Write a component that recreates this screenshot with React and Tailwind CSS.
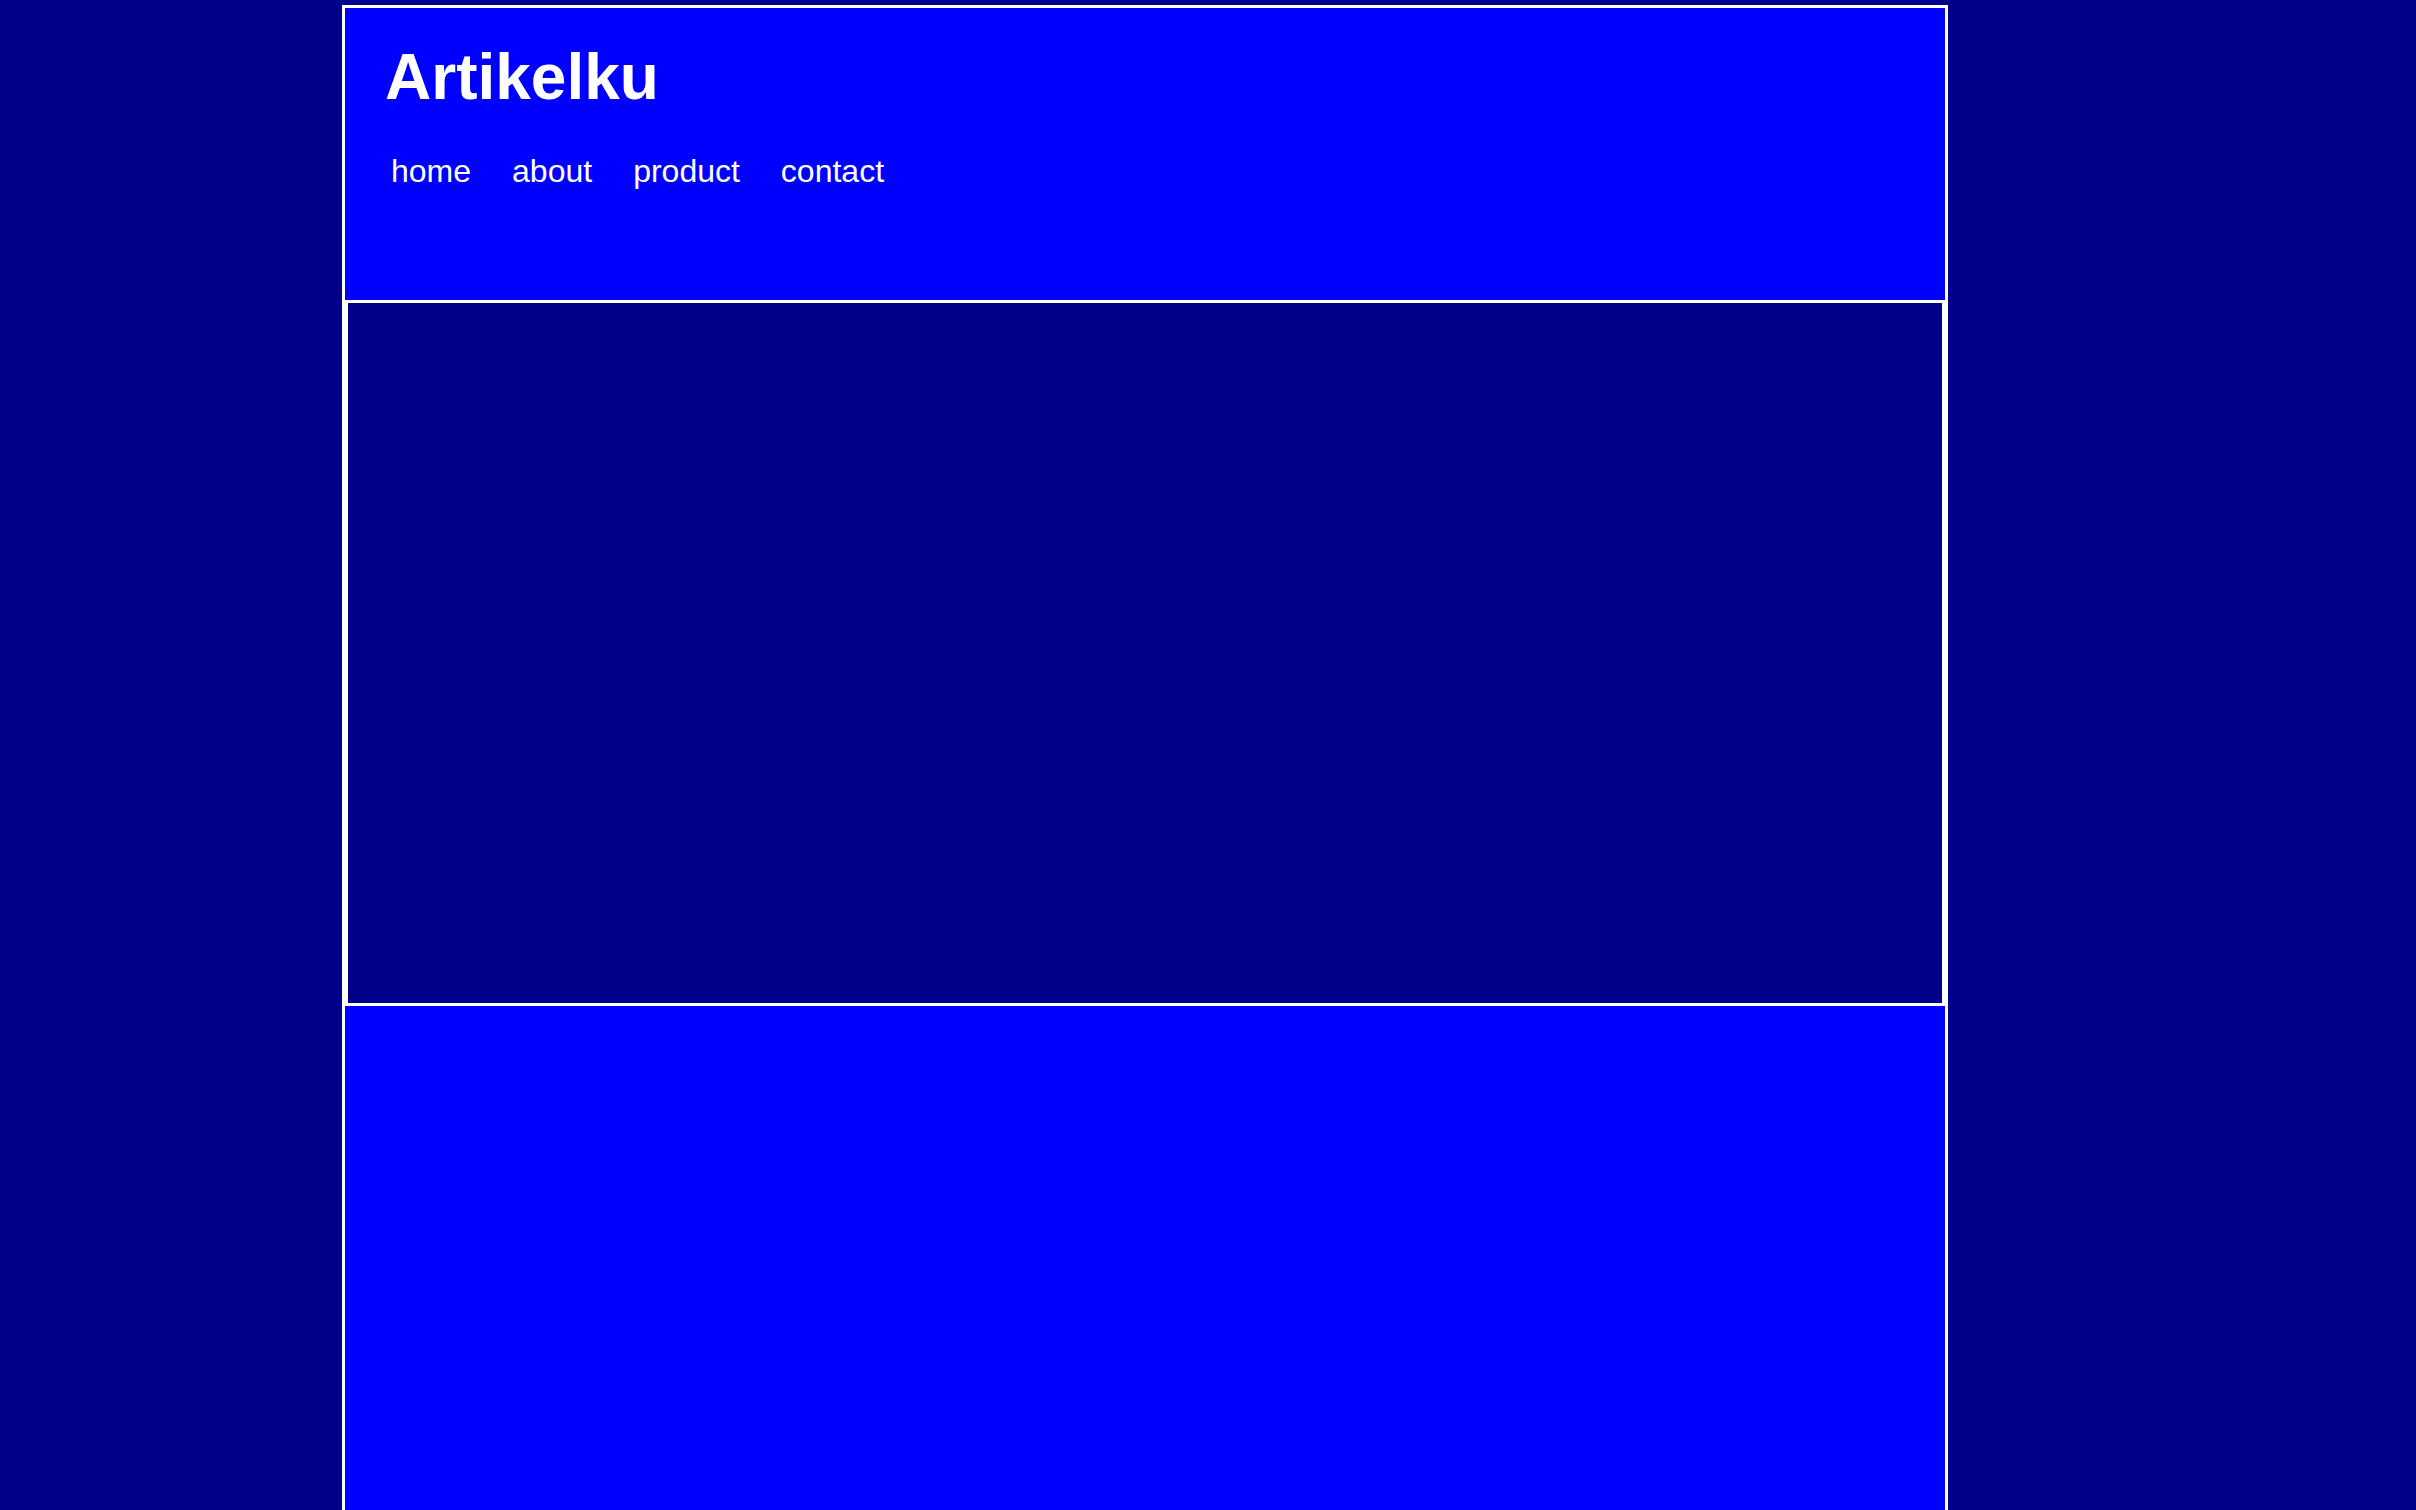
export default function App() {
  return (
    <div className="min-h-[1510px] bg-[#00008b] pt-[5px] overflow-hidden" style={{ fontFamily: '"Liberation Sans", Arial, sans-serif' }}>
      <div className="ml-[342px] w-[1606px] border-[3px] border-b-0 border-white bg-[#0000ff]">
        <header className="h-[292px] pl-[40px] pt-[37px] text-white">
          <h1 className="text-[64px] font-bold leading-[64px]">Artikelku</h1>
          <nav className="mt-[46px] flex gap-[41px] pl-[6px] text-[32px] leading-[32px]">
            <a href="#">home</a>
            <a href="#">about</a>
            <a href="#">product</a>
            <a href="#">contact</a>
          </nav>
        </header>
        <section className="h-[706px] border-[3px] border-white bg-[#00008b]" />
        <footer className="h-[600px]" />
      </div>
    </div>
  );
}
